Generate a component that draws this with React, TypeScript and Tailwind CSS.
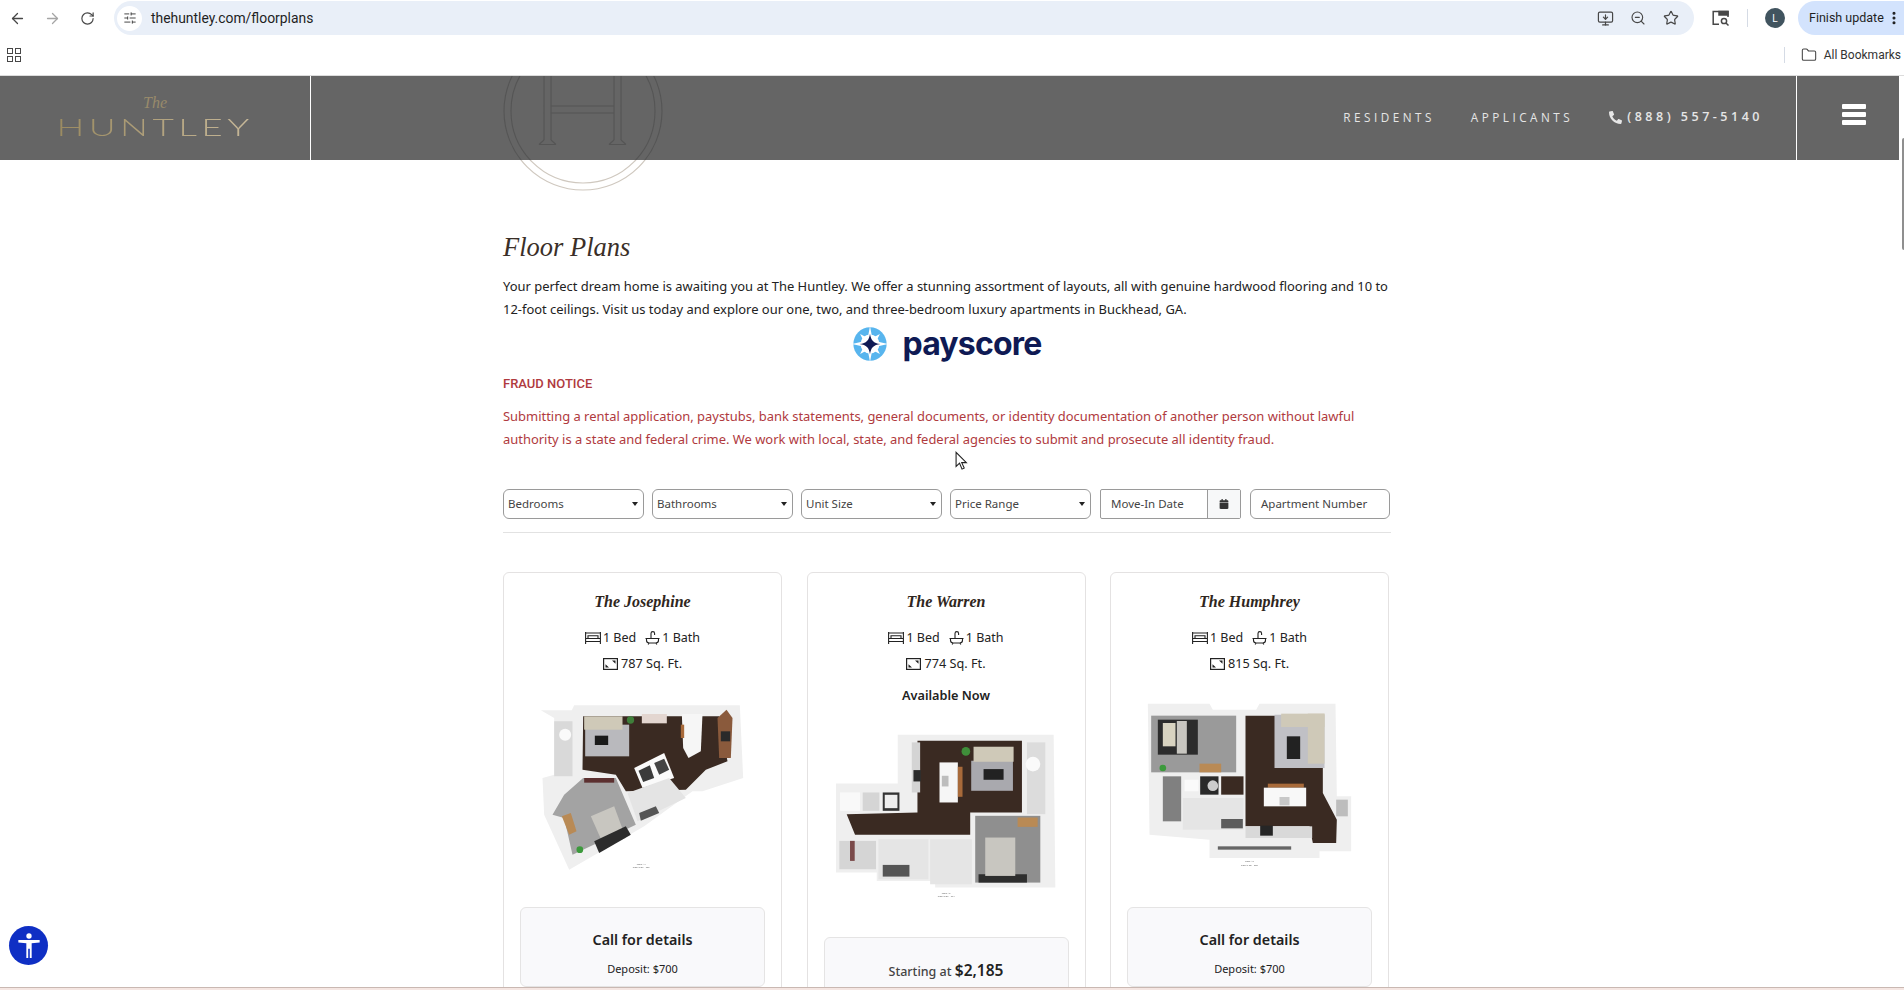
import { ArrowLeft, ArrowRight, RotateCw, SlidersHorizontal, MonitorDown, ZoomOut, Star, EllipsisVertical, Folder } from 'lucide-react';
import { FaPhone, FaCalendar } from 'react-icons/fa';
import type { ReactNode } from 'react';

// floor plan helpers, coordinates are in 3x reference pixels
const R = ({ x, y, w, h, f }: { x: number; y: number; w: number; h: number; f: string }) => (
  <rect x={x} y={y} width={w} height={h} fill={f} />
);
const P = ({ p, f }: { p: string; f: string }) => <polygon points={p} fill={f} />;

const WOOD = '#3a2a22';
const CARPET = '#a3a3a3';
const WALL = '#efefef';

function Caption({ x, y, a, b }: { x: number; y: number; a: string; b: string }) {
  return (
    <g fontSize="7" fill="#555" textAnchor="middle" fontFamily="Liberation Sans, sans-serif">
      <text x={x} y={y}>{a}</text>
      <text x={x} y={y + 10}>{b}</text>
    </g>
  );
}

function JosephinePlan() {
  return (
    <svg viewBox="150 425 620 510" className="w-[207px] h-[170px] mx-auto block blur-[0.4px]">
      <P p="155,447 248,447 255,432 752,432 762,650 640,690 610,690 465,795 240,925 165,760 160,650 195,640 195,470" f={WALL} />
      <P p="195,480 250,480 250,645 195,645" f="#d9d9d9" />
      <circle cx="228" cy="520" r="18" fill="#fafafa" />
      <P p="282,465 690,465 715,600 650,625 590,685 410,690 380,640 280,625" f={WOOD} />
      <R x={288} y={490} w={132} h={95} f="#b9b9bd" />
      <R x={285} y={465} w={115} h={40} f="#cfc9b8" />
      <R x={317} y={523} w={40} h={28} f="#1a1a1a" />
      <R x={458} y={458} w={75} h={28} f="#e3d6d0" />
      <circle cx="424" cy="476" r="11" fill="#3f7f3a" />
      <P p="578,458 640,458 635,570 598,590 582,560" f="#f6f6f6" />
      <R x={575} y={490} w={10} h={40} f="#a86a3a" />
      <P p="712,445 730,470 725,590 690,590 685,470" f="#8a5a3c" />
      <R x={695} y={510} w={28} h={30} f="#2a2a2a" />
      <P p="435,620 525,575 555,650 460,680" f="#fafafa" />
      <P p="448,628 482,612 495,650 462,662" f="#3b3b3b" />
      <P p="495,605 525,592 540,625 510,640" f="#444" />
      <P p="282,650 380,650 440,790 250,880 225,770 190,760 225,700" f={CARPET} />
      <P p="305,765 375,735 410,830 345,855" f="#c8c6c0" />
      <P p="315,840 410,795 425,820 330,875" f="#2c2c2c" />
      <P p="218,765 245,755 262,810 240,820" f="#b98a55" />
      <R x={285} y={650} w={90} h={14} f="#5c3030" />
      <circle cx="272" cy="865" r="10" fill="#3c9a3c" />
      <P p="415,695 540,650 590,710 445,780" f="#e4e4e4" />
      <P p="450,755 500,735 510,755 455,778" f="#555" />
      <Caption x={456} y={911} a="UNIT A4" b="TOTAL SF - 787" />
    </svg>
  );
}

function WarrenPlan() {
  return (
    <svg viewBox="105 520 665 500" className="w-[222px] h-[167px] mx-auto block blur-[0.4px]">
      <P p="293,522 760,522 765,980 405,980 405,960 230,960 230,935 108,935 108,668 293,668" f={WALL} />
      <R x={680} y={545} w={55} h={215} f="#dcdcdc" />
      <circle cx="698" cy="610" r="22" fill="#fafafa" />
      <P p="352,540 665,540 665,755 510,755 510,822 165,822 140,760 352,755" f={WOOD} />
      <R x={513} y={600} w={125} h={90} f="#a9a9ae" />
      <R x={520} y={558} w={120} h={45} f="#cfc9b8" />
      <R x={550} y={625} w={60} h={32} f="#222" />
      <circle cx="497" cy="572" r="13" fill="#3f8f3a" />
      <R x={418} y={605} w={55} h={120} f="#f6f6f6" />
      <R x={425} y={645} w={20} h={32} f="#bdbdbd" />
      <R x={473} y={618} w={14} h={90} f="#a86a3a" />
      <R x={335} y={545} w={25} h={150} f="#d4d4d4" />
      <R x={340} y={628} w={22} h={34} f="#2a2a2a" />
      <R x={120} y={695} w={60} h={55} f="#f9f9f9" />
      <R x={188} y={695} w={50} h={55} f="#d5d5d5" />
      <R x={248} y={695} w={50} h={55} f="#333" />
      <R x={254} y={702} w={38} h={40} f="#eee" />
      <R x={525} y={765} w={195} h={200} f="#8f8f8f" />
      <R x={535} y={940} w={145} h={25} f="#2e2e2e" />
      <R x={555} y={830} w={90} h={115} f="#c8c6c0" />
      <R x={652} y={770} w={60} h={28} f="#b98a55" />
      <R x={235} y={835} w={150} h={120} f="#e5e5e5" />
      <R x={248} y={912} w={80} h={35} f="#555" />
      <R x={390} y={835} w={125} h={135} f="#e5e5e5" />
      <R x={118} y={840} w={110} h={85} f="#d5d5d5" />
      <R x={150} y={840} w={14} h={60} f="#7a4a4a" />
      <Caption x={438} y={998} a="UNIT A1" b="TOTAL SF - 774" />
    </svg>
  );
}

function HumphreyPlan() {
  return (
    <svg viewBox="140 430 620 495" className="w-[207px] h-[165px] mx-auto block blur-[0.4px]">
      <P p="145,432 330,432 340,450 470,450 480,432 708,432 712,710 755,710 755,875 660,875 660,895 330,895 330,840 150,825" f={WALL} />
      <R x={155} y={468} w={255} h={170} f="#9a9a9a" />
      <R x={175} y={480} w={120} h={105} f="#2c2c2c" />
      <R x={190} y={490} w={38} h={70} f="#d8d3c0" />
      <R x={232} y={484} w={30} h={98} f="#c8c6c0" />
      <R x={300} y={612} w={65} h={26} f="#b98a55" />
      <circle cx="190" cy="625" r="10" fill="#3c9a3c" />
      <P p="438,468 670,468 670,700 712,780 710,850 640,850 630,800 438,800" f={WOOD} />
      <R x={365} y={650} w={67} h={55} f={WOOD} />
      <P p="525,465 675,465 675,625 525,625" f="#c0c0c5" />
      <R x={625} y={462} w={50} h={150} f="#cfc9b8" />
      <R x={545} y={462} w={130} h={40} f="#cfc9b8" />
      <R x={562} y={530} w={40} h={68} f="#222" />
      <R x={505} y={672} w={108} h={12} f="#a86a3a" />
      <R x={493} y={684} w={127} h={56} f="#f8f8f8" />
      <R x={540} y={712} w={30} h={25} f="#c8c8c8" />
      <R x={438} y={800} w={200} h={35} f="#d9d9d9" />
      <R x={482} y={798} w={38} h={30} f="#262626" />
      <R x={302} y={650} w={55} h={55} f="#2a2a2a" />
      <circle cx="340" cy="678" r="16" fill="#ccc" />
      <R x={255} y={660} w={42} h={35} f="#fafafa" />
      <R x={190} y={650} w={55} h={135} f="#808080" />
      <R x={250} y={715} w={182} h={95} f="#e5e5e5" />
      <R x={365} y={778} w={65} h={28} f="#5c5c5c" />
      <R x={355} y={860} w={220} h={10} f="#666" />
      <R x={710} y={720} w={35} h={50} f="#bdbdbd" />
      <Caption x={450} y={908} a="UNIT A7" b="TOTAL SF - 815" />
    </svg>
  );
}

function BedIcon() {
  return (
    <svg viewBox="0 0 16 12" className="w-4 h-3 shrink-0 mr-[2px]" fill="none" stroke="#222" strokeWidth="1.1">
      <path d="M.6 0v12M15.4 0v12M.6 1h14.8M.6 6.5h14.8M.6 9.5h14.8M3 6.5V3.8h10v2.7" />
    </svg>
  );
}

function BathIcon() {
  return (
    <svg viewBox="0 0 15 14" className="w-[15px] h-[14px] shrink-0 mr-[2px]" fill="none" stroke="#222" strokeWidth="1.1">
      <path d="M.5 7.5h14M1.5 7.5v1.8a2.7 2.7 0 0 0 2.7 2.7h6.6a2.7 2.7 0 0 0 2.7-2.7V7.5M4 12l-.8 1.6M11 12l.8 1.6M6 7.5V2.4a1.8 1.8 0 0 1 3.6 0V4" />
    </svg>
  );
}

function SqFtIcon() {
  return (
    <svg viewBox="0 0 15 12" className="w-[15px] h-3 shrink-0" fill="none">
      <rect x="0.6" y="0.6" width="13.8" height="10.8" stroke="#222" strokeWidth="1.2" />
      <path d="M9 2.5h3.5v3.2zM6 9.5H2.5V6.3z" fill="#222" />
    </svg>
  );
}

function Card({ name, sqft, available, plan, mtPlan, mtBox, children }: {
  name: string;
  sqft: string;
  available?: boolean;
  plan: ReactNode;
  mtPlan: string;
  mtBox: string;
  children: ReactNode;
}) {
  return (
    <div className="w-[279px] h-[480px] border border-[#e4e2e2] rounded-md pt-[18px] px-4 text-[#222] shrink-0">
      <h3 className="h-[22px] leading-[22px] text-center text-[16px] font-bold italic text-[#2f2620] font-['Liberation_Serif',serif]">{name}</h3>
      <div className="mt-[12px] h-[26px] flex items-center justify-center text-[12.5px]">
        <BedIcon />
        <span>1 Bed</span>
        <span className="w-[9px]" />
        <BathIcon />
        <span>1 Bath</span>
      </div>
      <div className="h-[26px] flex items-center justify-center gap-[3px] text-[12.7px]">
        <SqFtIcon />
        <span>{sqft}</span>
      </div>
      {available && <div className="mt-[6px] h-6 leading-6 text-center text-[12.7px] font-semibold">Available Now</div>}
      <div className={mtPlan}>{plan}</div>
      <div className={`${mtBox} h-[80px] bg-[#f9f9fb] border border-[#e5e4e4] rounded-md text-center`}>{children}</div>
    </div>
  );
}

function CallBox() {
  return (
    <>
      <div className="mt-[22px] h-5 leading-5 text-[14.3px] font-semibold text-[#222]">Call for details</div>
      <div className="mt-[11px] h-4 leading-4 text-[11px] text-[#222]">Deposit: $700</div>
    </>
  );
}

function FilterSelect({ label }: { label: string }) {
  return (
    <div className="w-[141px] h-[30px] border border-[#9a9a9a] rounded-md flex items-center justify-between pl-[4px] pr-[5px] text-[11.5px] text-[#444]">
      <span>{label}</span>
      <span className="w-0 h-0 border-x-[3px] border-x-transparent border-t-[4px] border-t-[#222]" />
    </div>
  );
}

export default function App() {
  return (
    <div className="h-[990px] w-[1904px] overflow-hidden flex flex-col bg-white font-['Noto_Sans',sans-serif]">
      {/* browser toolbar */}
      <div className="h-[36px] shrink-0 flex items-center text-[#474747] font-['Roboto',sans-serif]">
        <ArrowLeft size={17} strokeWidth={1.8} className="ml-[9px]" />
        <ArrowRight size={17} strokeWidth={1.8} className="ml-[18px] text-[#a5a5a5]" />
        <RotateCw size={15} strokeWidth={1.9} className="ml-[19px]" />
        <div className="ml-[19px] w-[1580px] h-[34px] rounded-full bg-[#e9eff8] flex items-center pl-[3px] pr-[15px]">
          <div className="w-[25px] h-[25px] rounded-full bg-white flex items-center justify-center">
            <SlidersHorizontal size={14} strokeWidth={1.7} />
          </div>
          <span className="ml-[9px] text-[13.9px] text-[#1f1f1f]">thehuntley.com/floorplans</span>
          <MonitorDown size={17} strokeWidth={1.7} className="ml-auto" />
          <ZoomOut size={16} strokeWidth={1.7} className="ml-[16px]" />
          <Star size={16} strokeWidth={1.8} className="ml-[17px]" />
        </div>
        <svg viewBox="0 0 18 16" className="ml-[18px] w-[18px] h-4" fill="none" stroke="#474747" strokeWidth="1.5">
          <path d="M7 14.2H1.2V1.5H16V7" />
          <path d="M7 1.5h9V5H7z" fill="#474747" />
          <circle cx="12" cy="11" r="2.6" />
          <path d="M14 13l2.5 2.5" />
        </svg>
        <div className="ml-[17px] w-px h-[18px] bg-[#d5dbe5]" />
        <div className="ml-[17px] w-[20px] h-[20px] rounded-full bg-[#41545f] text-white text-[10px] flex items-center justify-center">L</div>
        <div className="ml-[13px] flex-1 min-w-0 h-[34px] rounded-l-full bg-[#d3e3fd] flex items-center pl-[11px] text-[12.5px] text-[#1f1f1f] whitespace-nowrap">
          <span>Finish update</span>
          <EllipsisVertical size={16} strokeWidth={2.6} className="ml-[2px] shrink-0" />
        </div>
      </div>
      {/* bookmarks bar */}
      <div className="h-[40px] shrink-0 flex items-center pb-[2px] border-b border-[#dcdcdc] text-[#474747] font-['Roboto',sans-serif]">
        <div className="ml-[7px] grid grid-cols-2 gap-[2px]">
          <span className="w-[6px] h-[6px] border border-[#474747]" />
          <span className="w-[6px] h-[6px] border border-[#474747]" />
          <span className="w-[6px] h-[6px] border border-[#474747]" />
          <span className="w-[6px] h-[6px] border border-[#474747]" />
        </div>
        <div className="ml-auto w-px h-[16px] bg-[#d5dbe5]" />
        <Folder size={16} strokeWidth={1.6} className="ml-[16px]" />
        <span className="ml-[7px] mr-[3px] text-[12px] text-[#333]">All Bookmarks</span>
      </div>

      {/* page */}
      <div className="flex-1 min-h-0 flex">
        <div className="relative flex-1 min-w-0 overflow-hidden">
          <header className="h-[84px] bg-[#656565] flex items-stretch">
            <div className="w-[311px] border-r border-white flex flex-col items-center justify-center pb-[3px]">
              <span className="h-[18px] leading-[18px] italic text-[16px] text-[#988a6b] font-['Liberation_Serif',serif]">The</span>
              <span className="mt-[3px] inline-block scale-x-[1.54] h-[24px] leading-[24px] text-[24px] font-light tracking-[0.12em] font-['Lato',sans-serif] bg-gradient-to-r from-[#9a8a60] to-[#c8b99a] bg-clip-text text-transparent">HUNTLEY</span>
            </div>
            <nav className="flex-1 flex items-center justify-end pr-[33px] pb-[1px] text-[11.7px] tracking-[0.3em] text-[#e6e6e6] font-['Open_Sans',sans-serif]">
              <a className="mr-[36px]">RESIDENTS</a>
              <a className="mr-[36px]">APPLICANTS</a>
              <FaPhone size={13} className="mr-[5px] -scale-x-100" />
              <a className="text-[12.5px] font-semibold">(888) 557-5140</a>
            </nav>
            <div className="w-[103px] border-l border-white flex flex-col items-center justify-center gap-[3px] pb-[8px] pl-[12px]">
              <span className="w-[24px] h-[5px] rounded-[1px] bg-white" />
              <span className="w-[24px] h-[5px] rounded-[1px] bg-white" />
              <span className="w-[24px] h-[5px] rounded-[1px] bg-white" />
            </div>
          </header>

          {/* crest hanging over the header */}
          <svg viewBox="0 0 160 116" className="absolute left-[503px] top-0 w-[160px] h-[116px]" fill="none">
            <defs>
              <clipPath id="crest-top"><rect x="0" y="0" width="160" height="84" /></clipPath>
              <clipPath id="crest-bottom"><rect x="0" y="84" width="160" height="32" /></clipPath>
            </defs>
            <g clipPath="url(#crest-top)" stroke="#555" strokeWidth="1.1">
              <circle cx="80" cy="35" r="79" />
              <circle cx="80" cy="35" r="72" />
              <path d="M41 0V64M36 68.5H53M48 0V64M41 64L36 68.5M48 64L53 68.5M111 0V64M118 0V64M111 64L106 68.5M118 64L123 68.5M106 68.5H123M48 30H111M48 37H111" />
            </g>
            <g clipPath="url(#crest-bottom)" stroke="#cfc8bf" strokeWidth="1.2">
              <circle cx="80" cy="35" r="79" />
              <circle cx="80" cy="35" r="72" />
            </g>
          </svg>

          <main className="ml-[503px] w-[888px] pt-[72px]">
            <h1 className="h-[30px] leading-[30px] text-[26.5px] italic text-[#3a2f28] font-['Liberation_Serif',serif]">Floor Plans</h1>
            <p className="mt-[13px] w-[892px] text-[12.95px] leading-[23px] text-[#222]">
              Your perfect dream home is awaiting you at The Huntley. We offer a stunning assortment of layouts, all with genuine hardwood flooring and 10 to 12-foot ceilings. Visit us today and explore our one, two, and three-bedroom luxury apartments in Buckhead, GA.
            </p>
            <div className="mt-[4px] h-[38px] flex items-center justify-center">
              <svg viewBox="0 0 40 40" className="w-[36px] h-[36px]">
                <circle cx="20" cy="20" r="18.5" fill="#58b5ee" />
                <path d="M20 0L23 16L40 20L23 24L20 40L17 24L0 20L17 16Z" fill="#fff" />
                <path d="M9 9L17 13L13 17ZM31 9L23 13L27 17ZM9 31L17 27L13 23ZM31 31L23 27L27 23Z" fill="#fff" />
                <circle cx="20" cy="20" r="10.5" fill="#fff" />
                <path d="M20 8.5C21 16 24 19 31.5 20C24 21 21 24 20 31.5C19 24 16 21 8.5 20C16 19 19 16 20 8.5Z" fill="#0f1a54" />
              </svg>
              <span className="ml-[14px] text-[32px] leading-[38px] font-bold tracking-[-0.025em] text-[#0f1a54] font-['Inter',sans-serif]">payscore</span>
            </div>
            <h4 className="mt-[11px] h-5 leading-5 text-[13px] font-medium text-[#b03a3e] font-['Roboto',sans-serif]">FRAUD NOTICE</h4>
            <p className="mt-[11px] w-[892px] text-[12.95px] leading-[23px] text-[#b03a3e]">
              Submitting a rental application, paystubs, bank statements, general documents, or identity documentation of another person without lawful authority is a state and federal crime. We work with local, state, and federal agencies to submit and prosecute all identity fraud.
            </p>
            <div className="mt-[38px] flex items-center gap-[8px] text-[#444] text-[11.5px]">
              <FilterSelect label="Bedrooms" />
              <FilterSelect label="Bathrooms" />
              <FilterSelect label="Unit Size" />
              <FilterSelect label="Price Range" />
              <div className="ml-[1px] w-[141px] h-[30px] flex border border-[#9a9a9a] rounded-[2px]">
                <span className="w-[106px] pl-[10px] leading-[28px]">Move-In Date</span>
                <span className="flex-1 border-l border-[#9a9a9a] bg-[#f7f8f9] flex items-center justify-center">
                  <FaCalendar size={10} className="text-[#333]" />
                </span>
              </div>
              <div className="ml-[1px] w-[140px] h-[30px] border border-[#9a9a9a] rounded-md pl-[10px] leading-[28px]">Apartment Number</div>
            </div>
            <hr className="mt-[13px] border-[#e2e2e2]" />
            <div className="mt-[39px] flex gap-[24.5px]">
              <Card name="The Josephine" sqft="787 Sq. Ft." plan={<JosephinePlan />} mtPlan="mt-[26px]" mtBox="mt-[34px]">
                <CallBox />
              </Card>
              <Card name="The Warren" sqft="774 Sq. Ft." available plan={<WarrenPlan />} mtPlan="mt-[27px]" mtBox="mt-[36px]">
                <div className="mt-[20px] h-6 leading-6 text-[12.5px] font-medium text-[#444]">
                  Starting at <span className="text-[15.5px] font-semibold text-[#222]">$2,185</span>
                </div>
              </Card>
              <Card name="The Humphrey" sqft="815 Sq. Ft." plan={<HumphreyPlan />} mtPlan="mt-[26px]" mtBox="mt-[39px]">
                <CallBox />
              </Card>
            </div>
          </main>

          {/* accessibility widget */}
          <button className="absolute left-[9px] top-[850px] w-[39px] h-[39px] rounded-full bg-[#0f2fc4] flex items-center justify-center">
            <svg viewBox="0 0 24 24" className="w-[32px] h-[32px]" fill="#fff">
              <circle cx="12" cy="4.5" r="2" />
              <path d="M4 7.5h16v1.8l-6 .7v11h-1.4v-7h-1.2v7H10V10l-6-.7z" />
            </svg>
          </button>

          {/* mouse pointer */}
          <svg viewBox="0 0 12 18" className="absolute left-[955px] top-[375px] w-[13px] h-[20px]">
            <path d="M1 1V14L4.2 11L6.5 16.5L8.5 15.5L6.2 10.5H10.5Z" fill="#fff" stroke="#222" strokeWidth="1" />
          </svg>
        </div>
        {/* scrollbar */}
        <div className="w-[5px] shrink-0 relative">
          <div className="ml-[3px] mt-[62px] w-[2px] h-[112px] bg-[#8f8f8f] rounded-l-sm" />
        </div>
      </div>
      <div className="h-[3px] shrink-0 border-t border-[#c9b8b2] bg-[#f5e6e2]" />
    </div>
  );
}
